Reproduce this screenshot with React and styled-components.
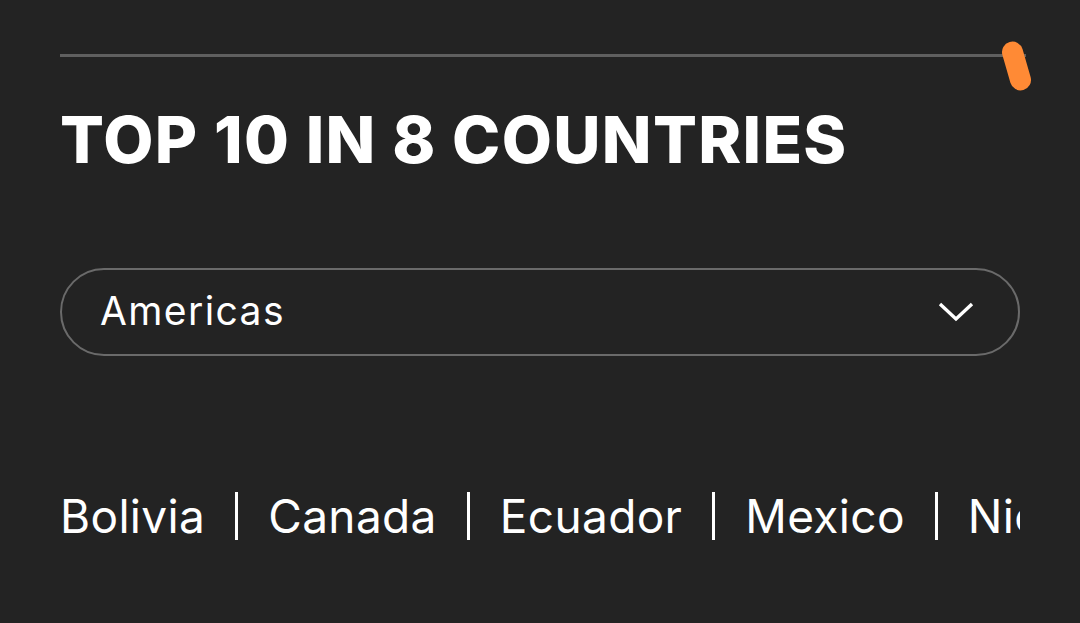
import React from "react";
import styled, { createGlobalStyle } from "styled-components";

const GlobalStyle = createGlobalStyle`
  html, body {
    margin: 0;
    padding: 0;
    background: #232323;
    font-family: Inter, "Noto Sans", sans-serif;
    color: #fff;
    overflow: hidden;
  }
`;

const Page = styled.div`
  width: 1080px;
  height: 623px;
  padding: 54px 60px 0;
  box-sizing: border-box;
`;

const Progress = styled.div`
  position: relative;
  height: 3px;
  background: #5f5f5f;
  width: 966px;
`;

const Marker = styled.div`
  position: absolute;
  right: -1px;
  top: -13px;
  width: 21px;
  height: 50px;
  border-radius: 11px;
  background: #ff8a35;
  transform: rotate(-16deg);
`;

const Title = styled.h1`
  margin: 50px 0 0;
  font-size: 65px;
  line-height: 66px;
  font-weight: 800;
  letter-spacing: 1.3px;
`;

const Select = styled.div`
  margin-top: 95px;
  height: 84px;
  border: 2px solid #6a6a6a;
  border-radius: 44px;
  display: flex;
  align-items: center;
  justify-content: space-between;
  padding: 0 44px 0 38px;
`;

const SelectLabel = styled.span`
  font-size: 39px;
  font-weight: 400;
  letter-spacing: 1.4px;
  margin-top: -4px;
`;

const Countries = styled.div`
  margin-top: 132px;
  display: flex;
  align-items: center;
  overflow: hidden;
  white-space: nowrap;
`;

const Country = styled.span`
  font-size: 46px;
  font-weight: 400;
  line-height: 56px;
  letter-spacing: 0.35px;
`;

const Divider = styled.span`
  flex: none;
  width: 3px;
  height: 48px;
  background: #fff;
  margin: 0 30px;
`;

const Chevron = () => (
  <svg width="36" height="22" viewBox="0 0 36 22" fill="none">
    <path d="M2 3 L18 18 L34 3" stroke="#fff" strokeWidth="3.4" />
  </svg>
);

const list = ["Bolivia", "Canada", "Ecuador", "Mexico", "Nicaragua", "Paraguay"];

export default function App() {
  return (
    <Page>
      <GlobalStyle />
      <Progress>
        <Marker />
      </Progress>
      <Title>TOP 10 IN 8 COUNTRIES</Title>
      <Select>
        <SelectLabel>Americas</SelectLabel>
        <Chevron />
      </Select>
      <Countries>
        {list.map((c, i) => (
          <React.Fragment key={c}>
            {i > 0 && <Divider />}
            <Country>{c}</Country>
          </React.Fragment>
        ))}
      </Countries>
    </Page>
  );
}
